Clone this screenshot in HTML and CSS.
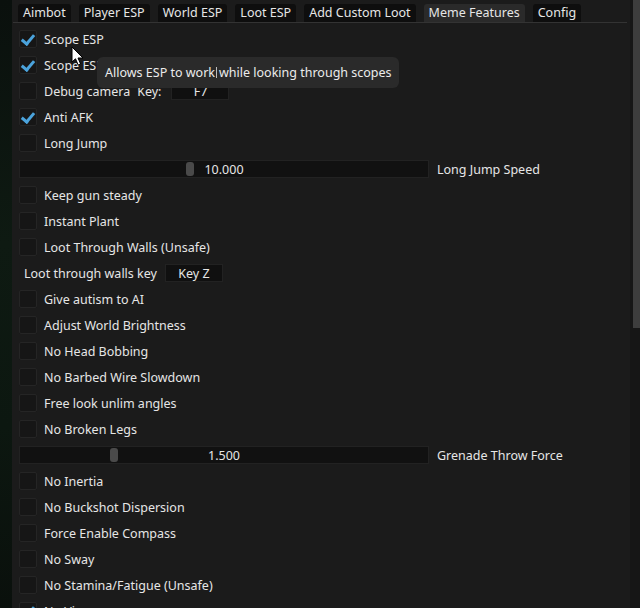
FILE: index.html
```html
<!DOCTYPE html>
<html>
<head>
<meta charset="utf-8">
<link rel="stylesheet" href="styles.css">
</head>
<body>
<div class="app">
  <div class="backdrop"></div>
  <div class="window">
    <div class="content">
      <div class="tabbar">
        <div class="tab">Aimbot</div>
        <div class="tab">Player ESP</div>
        <div class="tab">World ESP</div>
        <div class="tab">Loot ESP</div>
        <div class="tab">Add Custom Loot</div>
        <div class="tab active">Meme Features</div>
        <div class="tab">Config</div>
      </div>
      <div class="rows">
        <div class="row"><span class="cb on"></span><span class="lbl">Scope ESP</span></div>
        <div class="row"><span class="cb on"></span><span class="lbl">Scope ESP Debug</span></div>
        <div class="row"><span class="cb"></span><span class="lbl">Debug camera</span><span class="lbl keylbl">Key:</span><span class="keybox cam">F7</span></div>
        <div class="row"><span class="cb on"></span><span class="lbl">Anti AFK</span></div>
        <div class="row"><span class="cb"></span><span class="lbl">Long Jump</span></div>
        <div class="row"><div class="slider"><span class="grab" style="left:166px"></span><span class="val">10.000</span></div><span class="lbl">Long Jump Speed</span></div>
        <div class="row"><span class="cb"></span><span class="lbl">Keep gun steady</span></div>
        <div class="row"><span class="cb"></span><span class="lbl">Instant Plant</span></div>
        <div class="row"><span class="cb"></span><span class="lbl">Loot Through Walls (Unsafe)</span></div>
        <div class="row"><span class="plain">Loot through walls key</span><span class="keybox loot">Key Z</span></div>
        <div class="row"><span class="cb"></span><span class="lbl">Give autism to AI</span></div>
        <div class="row"><span class="cb"></span><span class="lbl">Adjust World Brightness</span></div>
        <div class="row"><span class="cb"></span><span class="lbl">No Head Bobbing</span></div>
        <div class="row"><span class="cb"></span><span class="lbl">No Barbed Wire Slowdown</span></div>
        <div class="row"><span class="cb"></span><span class="lbl">Free look unlim angles</span></div>
        <div class="row"><span class="cb"></span><span class="lbl">No Broken Legs</span></div>
        <div class="row"><div class="slider"><span class="grab" style="left:90px"></span><span class="val">1.500</span></div><span class="lbl">Grenade Throw Force</span></div>
        <div class="row"><span class="cb"></span><span class="lbl">No Inertia</span></div>
        <div class="row"><span class="cb"></span><span class="lbl">No Buckshot Dispersion</span></div>
        <div class="row"><span class="cb"></span><span class="lbl">Force Enable Compass</span></div>
        <div class="row"><span class="cb"></span><span class="lbl">No Sway</span></div>
        <div class="row"><span class="cb"></span><span class="lbl">No Stamina/Fatigue (Unsafe)</span></div>
        <div class="row"><span class="cb on"></span><span class="lbl">No Visor</span></div>
      </div>
    </div>
    <div class="scrollbar"><div class="thumb"></div></div>
  </div>
  <div class="tooltip">Allows ESP to work<span class="ibeam"></span>while looking through scopes</div>
  <svg class="cursor" width="14" height="21" viewBox="0 0 14 21">
    <path d="M1 1 L1 16 L4.5 12.8 L7.2 19 L9.6 18 L7 12 L12 12 Z" fill="#ffffff" stroke="#000000" stroke-width="1" stroke-linejoin="round"/>
  </svg>
</div>
</body>
</html>
```
FILE: styles.css
```css
* { box-sizing: border-box; }
html, body {
  margin: 0;
  padding: 0;
  width: 640px;
  height: 608px;
  overflow: hidden;
  background: #0c120f;
  font-family: "Noto Sans", "Open Sans", sans-serif;
  font-size: 12.5px;
  color: #e6e6e6;
}
.app {
  position: relative;
  display: flex;
  width: 640px;
  height: 608px;
}
.backdrop {
  width: 12px;
  flex: none;
  background: linear-gradient(180deg, #0a100d 0%, #0e1a12 40%, #0c1710 70%, #0a100c 100%);
}
.window {
  flex: 1;
  display: flex;
  background: #1b1b1b;
}
.content {
  flex: 1;
  display: flex;
  flex-direction: column;
  overflow: hidden;
}
.tabbar {
  display: flex;
  gap: 8px;
  height: 23px;
  padding: 4px 0 0 5px;
  margin-left: 1px;
  margin-right: 3px;
  border-bottom: 1px solid #333333;
}
.tab {
  height: 18px;
  line-height: 18px;
  padding: 0 5px;
  background: #0e0e0e;
  border-radius: 3px 3px 0 0;
  white-space: nowrap;
}
.tab.active {
  background: #2a2a2a;
}
.rows {
  display: flex;
  flex-direction: column;
  gap: 8px;
  padding: 7px 0 0 7px;
}
.row {
  display: flex;
  align-items: center;
  height: 18px;
  flex: none;
  white-space: nowrap;
}
.cb {
  width: 18px;
  height: 18px;
  flex: none;
  background: #161616;
  border: 1px solid #252525;
  border-radius: 2px;
  position: relative;
}
.cb.on::after {
  content: "";
  position: absolute;
  left: 4px;
  top: 1px;
  width: 5px;
  height: 10px;
  border-right: 3px solid #4ba3dc;
  border-bottom: 3px solid #4ba3dc;
  transform: rotate(40deg);
  transform-origin: center;
}
.lbl {
  margin-left: 7px;
}
.keylbl {
  margin-left: 7px;
}
.plain {
  margin-left: 5px;
}
.keybox {
  height: 18px;
  line-height: 18px;
  background: #101010;
  border: 1px solid #222222;
  text-align: center;
}
.keybox.cam {
  width: 58px;
  margin-left: 10px;
}
.keybox.loot {
  width: 58px;
  margin-left: 8px;
}
.slider {
  position: relative;
  width: 410px;
  height: 18px;
  flex: none;
  background: #111111;
  border: 1px solid #222222;
  text-align: center;
  line-height: 17px;
}
.slider + .lbl {
  margin-left: 8px;
}
.grab {
  position: absolute;
  top: 1px;
  width: 8px;
  height: 14px;
  background: #4a4a4a;
  border-radius: 3px;
}
.val {
  position: relative;
}
.scrollbar {
  width: 10px;
  flex: none;
  background: #161616;
  padding-left: 3px;
}
.thumb {
  width: 7px;
  height: 328px;
  background: #3d3d3d;
}
.tooltip {
  position: absolute;
  left: 97px;
  top: 57px;
  width: 302px;
  height: 31px;
  padding: 0 8px;
  line-height: 31px;
  background: #2a2a2a;
  border-radius: 6px;
  white-space: nowrap;
  color: #ececec;
}
.ibeam {
  display: inline-block;
  width: 1px;
  height: 11px;
  background: #bdbdbd;
  margin: 0 2px 0 1px;
  vertical-align: -1px;
}
.cursor {
  position: absolute;
  left: 71px;
  top: 46px;
}
```
